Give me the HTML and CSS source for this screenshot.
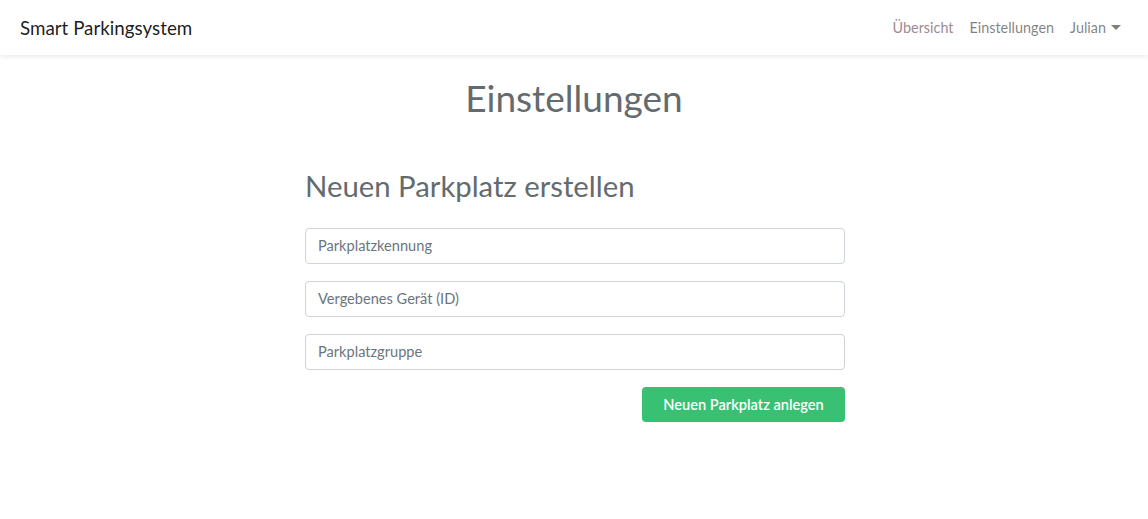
FILE: index.html
```html
<!DOCTYPE html>
<html lang="de">
<head>
<meta charset="utf-8">
<title>Smart Parkingsystem</title>
<link rel="stylesheet" href="styles.css">
</head>
<body>
<nav class="navbar">
  <a class="brand" href="#">Smart Parkingsystem</a>
  <ul class="nav">
    <li><a class="nav-link nav-visited" href="#">Übersicht</a></li>
    <li><a class="nav-link" href="#">Einstellungen</a></li>
    <li><a class="nav-link dropdown" href="#">Julian <span class="caret"></span></a></li>
  </ul>
</nav>
<main class="main">
  <h1 class="title">Einstellungen</h1>
  <section class="form-wrap">
    <h2 class="subtitle">Neuen Parkplatz erstellen</h2>
    <form class="form">
      <input class="input" type="text" placeholder="Parkplatzkennung">
      <input class="input" type="text" placeholder="Vergebenes Gerät (ID)">
      <input class="input" type="text" placeholder="Parkplatzgruppe">
      <div class="actions">
        <button class="btn" type="button">Neuen Parkplatz anlegen</button>
      </div>
    </form>
  </section>
</main>
</body>
</html>
```
FILE: styles.css
```css
* { box-sizing: border-box; }
html, body { margin: 0; background: #fff; }
body {
  font-family: Lato, "Noto Sans", sans-serif;
  font-size: 14.4px;
  color: #212529;
}
.navbar {
  height: 55px;
  display: flex;
  align-items: center;
  justify-content: space-between;
  padding: 0 19px 0 20px;
  background: #fff;
  box-shadow: 0 2px 4px rgba(0,0,0,.075);
}
.brand {
  font-size: 18.8px;
  color: rgba(0,0,0,.9);
  text-decoration: none;
}
.nav {
  display: flex;
  list-style: none;
  margin: 0;
  padding: 0;
}
.nav-link {
  display: flex;
  align-items: center;
  padding: 8px 8px;
  color: rgba(0,0,0,.5);
  text-decoration: none;
}
.nav-visited { color: #9d8a93; }
.caret {
  display: inline-block;
  width: 0; height: 0;
  margin-left: 5px;
  border-top: 5px solid rgba(0,0,0,.5);
  border-left: 5px solid transparent;
  border-right: 5px solid transparent;
}
.main { padding-top: 21px; }
.title {
  margin: 0;
  text-align: center;
  font-size: 37px;
  font-weight: 400;
  line-height: 1.2;
  color: #636b6f;
}
.form-wrap {
  width: 540px;
  margin: 48px 0 0 calc(50% - 269px);
}
.subtitle {
  margin: 0 0 24px;
  font-size: 29.3px;
  font-weight: 400;
  line-height: 1.2;
  color: #636b6f;
}
.form { display: flex; flex-direction: column; }
.input {
  height: 36px;
  margin-bottom: 17px;
  padding: 0 12px;
  border: 1px solid #ced4da;
  border-radius: 4px;
  font-family: inherit;
  font-size: 14.6px;
  color: #495057;
}
.input::placeholder { color: #6c757d; opacity: 1; }
.actions { display: flex; justify-content: flex-end; }
.btn {
  width: 203px;
  height: 35px;
  border: 0;
  border-radius: 4px;
  background: #38c172;
  color: #fff;
  font-family: inherit;
  font-size: 14.6px;
  font-weight: 600;
}
```
